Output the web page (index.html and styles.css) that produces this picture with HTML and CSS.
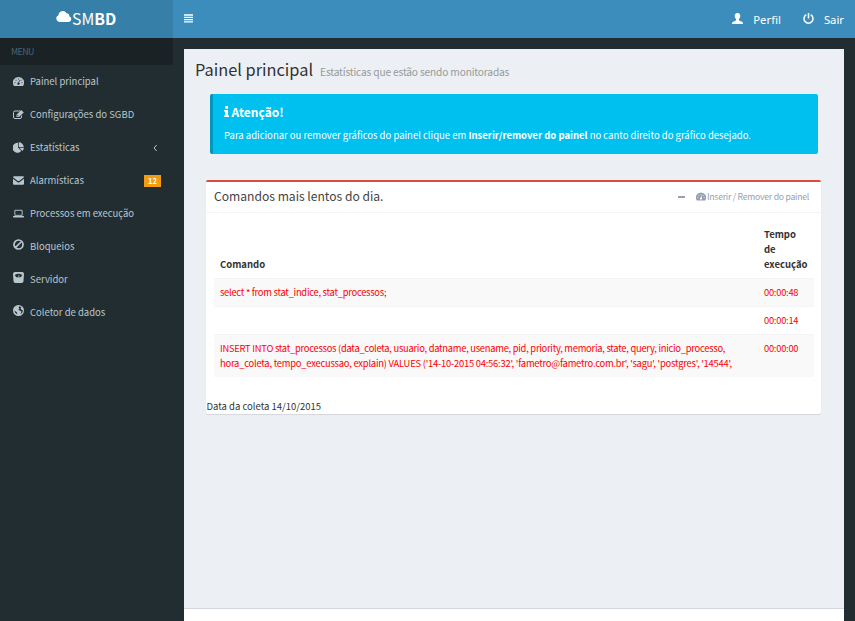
FILE: index.html
```html
<!DOCTYPE html>
<html lang="pt-BR">
<head>
<meta charset="utf-8">
<title>SMBD - Painel principal</title>
<link rel="stylesheet" href="styles.css">
</head>
<body>
<svg class="sprite" aria-hidden="true">
  <symbol id="dash" viewBox="0 0 22 18"><path fill-rule="evenodd" d="M11 0A11 11 0 0 0 1.500 17q.4 1 1.500 1h16q1.100 0 1.500-1A11 11 0 0 0 11 0zM3 10.500h1.800v1.800H3zM5.200 5.500H7v1.800H5.200zM10.100 3h1.800v1.800h-1.800zM15 5.500h1.800v1.800H15zM17.200 10.500H19v1.800h-1.800zM12.300 6l1.200.4-1.300 5a2.300 2.300 0 1 1-1.300-.4z"/></symbol>
  <symbol id="edit" viewBox="0 0 22 18"><path fill="none" stroke="currentColor" stroke-width="2" d="M14 2H4a3 3 0 0 0-3 3v9a3 3 0 0 0 3 3h10a3 3 0 0 0 3-3v-3"/><path fill-rule="evenodd" d="M7 9.500L16.500 0 21.500 5 12 14H7zM8.500 10.500v2h2l.5-.5-2-2z"/></symbol>
  <symbol id="pie" viewBox="0 0 22 21"><path d="M10 1v9.500l6.500 7A10 10 0 1 1 10 1zM11.500 0A10 10 0 0 1 21.500 9.500h-10zM12.500 11h9.500a9.500 9.500 0 0 1-3.500 6.500z"/></symbol>
  <symbol id="mail" viewBox="0 0 22 17"><path d="M0 2q0-2 2-2h18q2 0 2 2l-9 7q-2 1.500-4 0zM0 5l8.500 6.500q2.500 2 5 0L22 5v10q0 2-2 2H2q-2 0-2-2z"/></symbol>
  <symbol id="laptop" viewBox="0 0 24 18"><path fill="none" stroke="currentColor" stroke-width="2" d="M4 2h16v11H4z"/><path d="M0 14.500h24v1q0 2-2 2H2q-2 0-2-2z"/></symbol>
  <symbol id="ban" viewBox="0 0 22 22"><path fill="none" stroke="currentColor" stroke-width="3.400" d="M11 2a9 9 0 1 1 0 18 9 9 0 0 1 0-18zM5 17L17 5"/></symbol>
  <symbol id="scale" viewBox="0 0 22 22"><path fill-rule="evenodd" d="M4 0h14q4 0 4 4l-1 14q0 4-4 4H5q-4 0-4-4L0 4q0-4 4-4zM3.500 6l3 4.500h9l3-4.500q-7.500-5-15 0zM10 9l2-3.500 1 3.500z"/></symbol>
  <symbol id="globe" viewBox="0 0 22 22"><path fill-rule="evenodd" d="M11 0a11 11 0 1 1 0 22 11 11 0 0 1 0-22zM13 2.500L11 5l2 2-2.500 3 3.500 1 3 2.500-2.500 5q5-2.500 5.500-7.500l-3-1.500-2-3 2-2zM3 11l1 4 4.500 4-.5-4z"/></symbol>
  <symbol id="cloud" viewBox="0 0 32 22"><path d="M7 22a7 7 0 0 1-2-13.500A8.500 8.500 0 0 1 21 4.500a5.500 5.500 0 0 1 5.500 6A6 6 0 0 1 26 22z"/></symbol>
  <symbol id="user" viewBox="0 0 22 22"><path d="M11 0c4 0 6 3 5.500 7-.3 2.500-1.500 4-2.500 5v3l6 2.500q2 1 2 4.500H0q0-3.500 2-4.500L8 15v-3c-1-1-2.200-2.500-2.500-5C5 3 7 0 11 0z"/></symbol>
  <symbol id="power" viewBox="0 0 22 22"><path fill="none" stroke="currentColor" stroke-width="3" d="M6.500 3.500a9 9 0 1 0 9 0M11 0v11"/></symbol>
  <symbol id="info" viewBox="0 0 10 22"><path d="M2.500 0h5.500v5.500H2.500zM0 8h8v11h2v3H0v-3h2v-8H0z"/></symbol>
</svg>
<header class="topbar">
  <a class="logo"><svg class="i-cloud"><use href="#cloud"/></svg><span>SM<b>BD</b></span></a>
  <svg class="burger" viewBox="0 0 9 9"><path d="M0 1h9M0 3.300h9M0 5.600h9M0 7.900h9" stroke="currentColor" stroke-width="1.300"/></svg>
  <nav class="usernav">
    <a><svg><use href="#user"/></svg>Perfil</a>
    <a><svg><use href="#power"/></svg>Sair</a>
  </nav>
</header>
<div class="wrapper">
  <aside class="sidebar">
    <div class="menu-title">MENU</div>
    <ul>
      <li><svg><use href="#dash"/></svg>Painel principal</li>
      <li><svg><use href="#edit"/></svg>Configurações do SGBD</li>
      <li><svg><use href="#pie"/></svg>Estatísticas<svg class="angle" viewBox="0 0 5 8"><path d="M3.700 1L1 4l2.700 3" fill="none" stroke="currentColor"/></svg></li>
      <li><svg><use href="#mail"/></svg>Alarmísticas<span class="badge">12</span></li>
      <li><svg><use href="#laptop"/></svg>Processos em execução</li>
      <li class="up"><svg><use href="#ban"/></svg>Bloqueios</li>
      <li class="up"><svg><use href="#scale"/></svg>Servidor</li>
      <li class="up"><svg><use href="#globe"/></svg>Coletor de dados</li>
    </ul>
  </aside>
  <div class="page">
    <main>
      <h1>Painel principal<small>Estatísticas que estão sendo monitoradas</small></h1>
      <section class="callout">
        <h4><svg><use href="#info"/></svg>Atenção!</h4>
        <p>Para adicionar ou remover gráficos do painel clique em <b>Inserir/remover do painel</b> no canto direito do gráfico desejado.</p>
      </section>
      <section class="box">
        <div class="box-head">
          <h3>Comandos mais lentos do dia.</h3>
          <div class="tools"><i class="minus"></i><svg><use href="#dash"/></svg><span>Inserir / Remover do painel</span></div>
        </div>
        <table>
          <thead><tr><th>Comando</th><th>Tempo<br>de<br>execução</th></tr></thead>
          <tbody>
            <tr><td>select * from stat_indice, stat_processos;</td><td>00:00:48</td></tr>
            <tr><td></td><td>00:00:14</td></tr>
            <tr><td>INSERT INTO stat_processos (data_coleta, usuario, datname, usename, pid, priority, memoria, state, query, inicio_processo,<br><span class="values">hora_coleta, tempo_execussao, explain) VALUES ('14-10-2015 04:56:32', 'fametro@fametro.com.br', 'sagu', 'postgres', '14544',</span></td><td>00:00:00</td></tr>
          </tbody>
        </table>
        <p class="date">Data da coleta 14/10/2015</p>
      </section>
    </main>
    <footer></footer>
  </div>
</div>
</body>
</html>
```
FILE: styles.css
```css
* { box-sizing: border-box; }
body {
  margin: 0;
  height: 621px;
  overflow: hidden;
  display: flex;
  flex-direction: column;
  background: #222d32;
  color: #333;
  font-family: "Noto Sans CJK SC", "Noto Sans", sans-serif;
  font-size: 9.500px;
  line-height: 15px;
}
svg { fill: currentColor; flex: none; }
.sprite { display: none; }
h1, h3, h4, p, ul { margin: 0; padding: 0; font-weight: 400; }
.topbar { display: flex; align-items: center; height: 38px; background: #3c8dbc; color: #fff; flex: none; }
.logo { width: 173px; height: 38px; flex: none; display: flex; align-items: center; padding-left: 56px; background: #367fa9; font-size: 15.800px; line-height: 38px; }
.i-cloud { width: 16px; height: 11px; margin-top: -5px; }
.burger { width: 9px; height: 9px; margin: -1px 0 0 11px; }
.usernav { margin-left: auto; display: flex; gap: 22px; padding-right: 11px; font-family: "Noto Sans", sans-serif; font-size: 11.300px; }
.usernav a { display: flex; align-items: center; gap: 10px; }
.usernav svg { width: 11px; height: 11px; margin-top: -2px; }
.wrapper { flex: 1; display: flex; }
.sidebar { width: 173px; flex: none; color: #b8c7ce; }
.menu-title { height: 27px; padding: 7px 11px; background: #1a2226; color: #4b646f; font-size: 8.800px; line-height: 14px; letter-spacing: -.55px; }
.sidebar ul { list-style: none; }
.sidebar li { height: 33px; display: flex; align-items: center; padding: 0 12px 0 13px; }
.sidebar li > svg { width: 11px; height: 11px; margin-right: 6px; }
.sidebar .up > svg { margin-top: -4px; }
.sidebar li > .angle { width: 5px; height: 8px; margin: 0 3px 0 auto; }
.badge { margin: 1px 0 0 auto; width: 17px; height: 12px; background: #f39c12; color: #fff; font-size: 7.500px; font-weight: 700; line-height: 12px; text-align: center; }
.page { flex: 1; min-width: 0; margin: 11px 11px 0; display: flex; flex-direction: column; }
main { flex: 1; background: #ecf0f5; padding: 10px 23px 0 22px; }
h1 { display: flex; align-items: baseline; margin-left: -11px; height: 35px; font-size: 16.350px; line-height: 20px; }
h1 small { margin-left: 7px; color: #999; font-size: 10.200px; letter-spacing: -.17px; }
.callout { height: 60px; margin: 0 3px 26px 4px; padding: 10px 11px; border-left: 3px solid #0097bc; border-radius: 2px; background: #00c0ef; color: #fff; }
h4 { display: flex; align-items: center; gap: 2.500px; font-size: 12px; font-weight: 700; line-height: 15px; margin-bottom: 9px; }
h4 svg { width: 5px; height: 11px; }
.box { height: 234px; background: #fff; border-top: 2px solid #dd4b39; border-radius: 2px; box-shadow: 0 1px 1px rgba(0,0,0,.1); }
.box-head { height: 31px; display: flex; align-items: center; justify-content: space-between; padding: 0 12px 0 8px; border-bottom: 1px solid #f4f4f4; }
h3 { margin-top: -3px; font-size: 12.100px; color: #444; }
.tools { display: flex; align-items: center; margin-top: -1px; color: #97a0b3; font-size: 8.700px; letter-spacing: -.26px; }
.tools svg { width: 10px; height: 9px; margin-right: 1px; }
.minus { width: 7px; height: 2px; margin-right: 11px; background: #97a0b3; }
table { width: 600px; margin: 8px 8px 21px; border-collapse: collapse; table-layout: fixed; }
th, td { padding: 6px; text-align: left; vertical-align: top; white-space: nowrap; }
td { color: #ff0000; font-size: 9.400px; letter-spacing: -.267px; }
.values { letter-spacing: -.224px; }
th { color: #333; vertical-align: bottom; }
th:last-child { width: 56px; }
tbody tr { height: 28px; border-top: 1px solid #f4f4f4; }
tbody tr:nth-child(odd) { background: #f9f9f9; }
.date { padding: 1px 0 0 .5px; }
footer { height: 13px; border-top: 1px solid #d2d6de; background: #fff; }
```
